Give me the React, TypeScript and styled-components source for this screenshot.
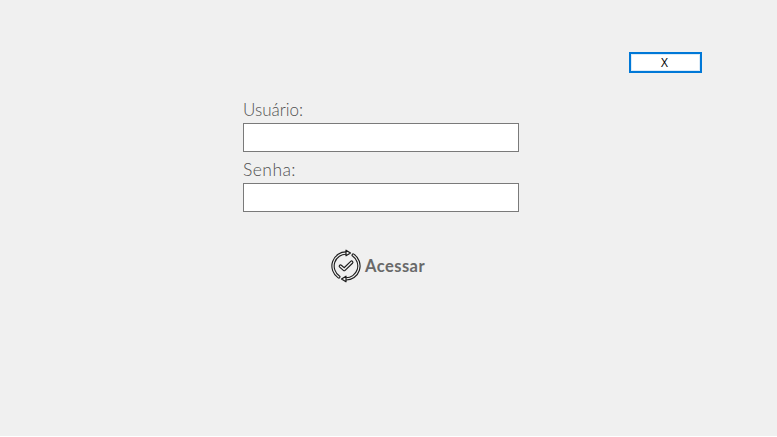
import React from "react";
import styled, { createGlobalStyle } from "styled-components";

const GlobalStyle = createGlobalStyle`
  * { box-sizing: border-box; }
  body { margin: 0; background: #fff; }
`;

const Screen = styled.main`
  display: flex;
  flex-direction: column;
  height: 436px;
  overflow: hidden;
  background: #f0f0f0;
  font-family: Lato, "Open Sans", sans-serif;
  color: #696969;
`;

const TopBar = styled.header`
  display: flex;
  justify-content: flex-end;
  padding: 52px 75px 0 0;
`;

const CloseButton = styled.button`
  width: 73px;
  height: 21px;
  padding: 0 2px 0 0;
  border: 2px solid #0078d7;
  box-shadow: inset 0 0 0 1px #dcebf7;
  background: #fff;
  color: #000;
  font: 12px/16px "Open Sans", sans-serif;
`;

const LoginForm = styled.form`
  display: flex;
  flex-direction: column;
  width: 276px;
  margin: 27px 0 0 243px;
`;

const Label = styled.label<{ $size: string; $spacing: string }>`
  height: 23px;
  font-size: ${(p) => p.$size};
  line-height: 20px;
  font-weight: 300;
  color: #505050;
  letter-spacing: ${(p) => p.$spacing};
`;

const Field = styled.input`
  width: 276px;
  height: 29px;
  margin-bottom: 8px;
  padding: 0 5px;
  border: 1px solid #7a7a7a;
  border-radius: 0;
  outline: none;
  background: #fff;
  font: 17px Lato, sans-serif;
`;

const SubmitButton = styled.button`
  display: flex;
  align-items: center;
  gap: 3px;
  height: 36px;
  margin: 28px 0 0 87px;
  padding: 0;
  border: 0;
  background: transparent;
  color: #696969;
  font: 700 16.5px/20px Lato, sans-serif;
  letter-spacing: 0.45px;
`;

const CycleIcon = () => (
  <svg width="32" height="36" viewBox="0 0 32 36" fill="none" strokeLinejoin="round" strokeLinecap="round">
    <g stroke="#1c1c1c" strokeWidth="3.4">
      <path d="M8.8 28.9A12.9 13 0 0 1 16.8 5.1" />
      <path d="M23.2 7.1A12.9 13 0 0 1 15.6 30.9" />
    </g>
    <g stroke="#f0f0f0" strokeWidth="1.2">
      <path d="M8.8 28.9A12.9 13 0 0 1 16.8 5.1" />
      <path d="M23.2 7.1A12.9 13 0 0 1 15.6 30.9" />
    </g>
    <g fill="#f0f0f0" stroke="#1c1c1c" strokeWidth="1.2">
      <path d="M16 2.2L20.5 5L16 7.8Z" />
      <path d="M16 28.2L11.5 31L16 33.8Z" />
    </g>
    <path d="M10.5 18.2L14.2 21.4L21.6 14.3" stroke="#1c1c1c" strokeWidth="3.7" />
    <path d="M10.5 18.2L14.2 21.4L21.6 14.3" stroke="#f0f0f0" strokeWidth="1.4" />
  </svg>
);

export default function App() {
  return (
    <>
      <GlobalStyle />
      <Screen>
        <TopBar>
          <CloseButton type="button">X</CloseButton>
        </TopBar>
        <LoginForm onSubmit={(e) => e.preventDefault()}>
          <Label htmlFor="usuario" $size="17px" $spacing="0px">Usuário:</Label>
          <Field id="usuario" />
          <Label htmlFor="senha" $size="17.5px" $spacing="0.45px">Senha:</Label>
          <Field id="senha" type="password" />
          <SubmitButton type="submit">
            <CycleIcon />
            Acessar
          </SubmitButton>
        </LoginForm>
      </Screen>
    </>
  );
}
